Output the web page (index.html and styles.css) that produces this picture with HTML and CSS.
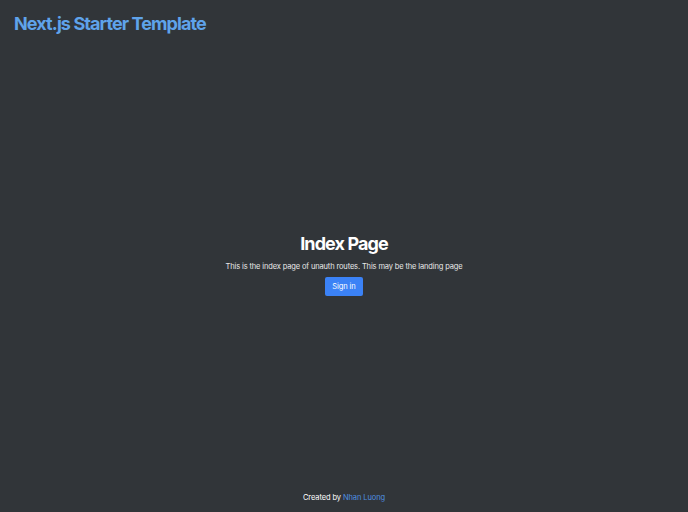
FILE: index.html
```html
<!DOCTYPE html>
<html lang="en">
<head>
    <meta charset="UTF-8">
    <meta name="viewport" content="width=device-width, initial-scale=1.0">
    <title>Next.js Starter Template</title>
    <link rel="stylesheet" href="styles.css">
</head>
<body>
    <div class="layout">
        <header class="header">
            <a class="brand" href="/">Next.js Starter Template</a>
        </header>
        <main class="main">
            <h1>Index Page</h1>
            <p>This is the index page of unauth routes. This may be the landing page</p>
            <button type="button">Sign in</button>
        </main>
        <footer class="footer">
            Created by <a href="#">Nhan Luong</a>
        </footer>
    </div>
</body>
</html>
```

FILE: styles.css
```css
body {
    font-family: Inter, "Noto Sans", sans-serif;
    background: #313539;
    color: #fff;
    margin: 0;
}
.layout {
    display: flex;
    flex-direction: column;
    min-height: 100vh;
}
.header {
    padding: 13px 14px;
}
.brand {
    color: #5fa3ea;
    font-size: 18px;
    font-weight: 700;
    letter-spacing: -0.9px;
    text-decoration: none;
}
.main {
    flex: 1;
    display: flex;
    flex-direction: column;
    align-items: center;
    justify-content: center;
    padding-top: 3px;
}
h1 {
    font-size: 18px;
    font-weight: 700;
    letter-spacing: -0.9px;
    margin: 0 0 8px;
}
p {
    font-size: 7.5px;
    letter-spacing: -0.14px;
    margin: 0 0 6px;
    color: #e8e8e8;
}
button {
    padding: 5px 7px;
    border: none;
    border-radius: 2px;
    background: #3b82f6;
    color: #fff;
    font-family: inherit;
    font-size: 7.5px;
    letter-spacing: -0.1px;
    cursor: pointer;
}
.footer {
    text-align: center;
    font-size: 7.5px;
    letter-spacing: -0.1px;
    padding: 14px 0 10px;
}
.footer a {
    color: #4f8fe0;
    text-decoration: none;
}
```
